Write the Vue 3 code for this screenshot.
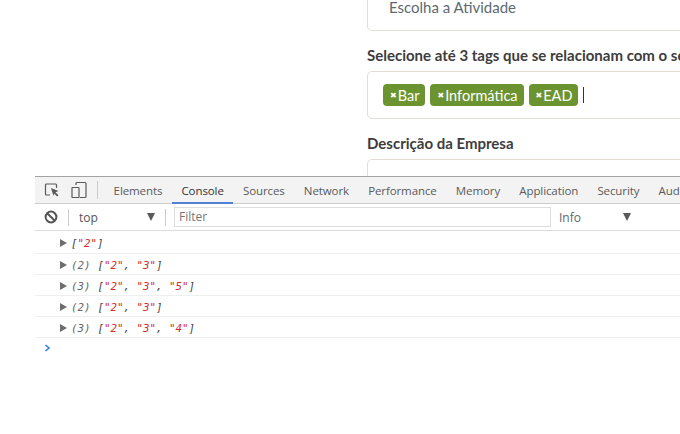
<script setup>
const tabs = ['Elements', 'Console', 'Sources', 'Network', 'Performance', 'Memory', 'Application', 'Security', 'Audits']
const logs = [
  { count: null, items: ['2'] },
  { count: 2, items: ['2', '3'] },
  { count: 3, items: ['2', '3', '5'] },
  { count: 2, items: ['2', '3'] },
  { count: 3, items: ['2', '3', '4'] },
]
const tags = ['Bar', 'Informática', 'EAD']
</script>

<template>
  <div class="screen">
    <section class="page">
      <div class="box first"><span class="placeholder">Escolha a Atividade</span></div>
      <label class="label l1">Selecione até 3 tags que se relacionam com o seu negócio</label>
      <div class="box tagbox">
        <span v-for="t in tags" :key="t" class="tag"><i class="x">✖</i>{{ t }}</span>
        <span class="caret"></span>
      </div>
      <label class="label l2">Descrição da Empresa</label>
      <div class="box last"></div>
    </section>

    <section class="devtools">
      <div class="tabbar">
        <svg class="ico inspect" width="16" height="16" viewBox="0 0 16 16">
          <path d="M6 13H2.5a1 1 0 0 1-1-1V3a1 1 0 0 1 1-1h9a1 1 0 0 1 1 1v3" fill="none" stroke="#5a5a5a" stroke-width="1.2"/>
          <path d="M7 6l7.5 3-3 1.2 3 3-1.4 1.4-3-3L9.5 14z" fill="#5a5a5a"/>
        </svg>
        <svg class="ico device" width="16" height="18" viewBox="0 0 16 18">
          <path d="M5 4V2.5a1 1 0 0 1 1-1h8a1 1 0 0 1 1 1v13a1 1 0 0 1-1 1H9" fill="none" stroke="#5a5a5a" stroke-width="1.2"/>
          <rect x="1" y="6.5" width="7" height="10" rx="0.6" fill="none" stroke="#5a5a5a" stroke-width="1.2"/>
        </svg>
        <span class="vsep"></span>
        <span v-for="t in tabs" :key="t" class="tab" :class="{ active: t === 'Console' }">{{ t }}</span>
      </div>
      <div class="filterbar">
        <svg class="ban" width="14" height="14" viewBox="0 0 14 14">
          <circle cx="7" cy="7" r="5.4" fill="none" stroke="#555" stroke-width="2"/>
          <path d="M3.2 3.2l7.6 7.6" stroke="#555" stroke-width="2"/>
        </svg>
        <span class="vsep short"></span>
        <span class="context">top</span>
        <span class="tri"></span>
        <span class="vsep short after-tri"></span>
        <div class="filter">Filter</div>
        <span class="level">Info</span>
        <span class="tri"></span>
      </div>
      <div class="log">
        <div v-for="(l, i) in logs" :key="i" class="row">
          <span class="arrow"></span>
          <span v-if="l.count" class="count">({{ l.count }})</span>
          <span class="arr">[<template v-for="(v, j) in l.items" :key="j"><span class="str">"{{ v }}"</span><template v-if="j < l.items.length - 1">, </template></template>]</span>
        </div>
        <div class="prompt">
          <svg width="7" height="8" viewBox="0 0 7 8"><path d="M1.5 1l3.5 3-3.5 3" fill="none" stroke="#367cf1" stroke-width="1.6"/></svg>
        </div>
      </div>
    </section>
  </div>
</template>

<style>
html, body { margin: 0; background: #fff; }
</style>

<style scoped>
.screen {
  width: 680px;
  height: 434px;
  overflow: hidden;
  background: #fff;
  display: flex;
  flex-direction: column;
}
.page {
  height: 176px;
  flex: none;
  overflow: hidden;
  padding-left: 367px;
  box-sizing: border-box;
  font-family: Lato, "Open Sans", sans-serif;
  color: #3f3f3f;
}
.box {
  width: 400px;
  box-sizing: border-box;
  border: 1px solid #e3dcd0;
  border-radius: 5px;
  background: #fff;
}
.first {
  height: 31px;
  border-top: 0;
  border-radius: 0 0 5px 5px;
  padding: 0 0 0 21px;
}
.placeholder {
  display: block;
  font-size: 15px;
  line-height: 15px;
  color: #5d6a70;
}
.label {
  display: block;
  font-size: 15px;
  font-weight: 700;
  line-height: 18px;
  white-space: nowrap;
  color: #3d3d3d;
}
.l1 { margin-top: 15px; }
.l2 { margin-top: 15px; }
.tagbox {
  margin-top: 7px;
  height: 48px;
  display: flex;
  align-items: center;
  gap: 5px;
  padding: 0 0 0 15px;
}
.tag {
  display: inline-flex;
  align-items: center;
  height: 22px;
  padding: 0 6px 0 7px;
  background: #6b9431;
  border-radius: 4px;
  color: #fff;
  font-size: 14.5px;
}
.x {
  font-style: normal;
  font-size: 8px;
  margin-right: 1px;
  font-family: "DejaVu Sans", sans-serif;
}
.caret {
  width: 1px;
  height: 16px;
  background: #333;
}
.last {
  margin-top: 7px;
  height: 40px;
}
.devtools {
  margin-left: 35px;
  flex: 1;
  font-family: "Open Sans", sans-serif;
  color: #5a5a5a;
  font-size: 11.5px;
  background: #fff;
  overflow: hidden;
}
.tabbar {
  height: 28px;
  box-sizing: border-box;
  border-top: 1px solid #a3a3a3;
  border-bottom: 1px solid #cdcdcd;
  background: #f3f3f3;
  display: flex;
  align-items: center;
  white-space: nowrap;
}
.ico { flex: none; }
.inspect { margin-left: 9px; }
.device { margin-left: 11px; }
.vsep {
  flex: none;
  width: 1px;
  height: 18px;
  background: #ccc;
  margin: 0 6px 0 10px;
}
.tab {
  flex: none;
  padding: 0 9.6px;
  height: 27px;
  line-height: 27px;
  box-sizing: border-box;
  letter-spacing: -0.1px;
}
.tab.active {
  color: #333;
  border-bottom: 2px solid #4f82d6;
}
.filterbar {
  height: 27px;
  box-sizing: border-box;
  border-bottom: 1px solid #ddd;
  display: flex;
  align-items: center;
  background: #fff;
  font-size: 12px;
}
.ban { margin-left: 9px; flex: none; }
.short { height: 17px; margin: 0 10px; }
.after-tri { margin-right: 8px; }
.context { width: 68px; color: #555; }
.tri {
  flex: none;
  width: 0;
  height: 0;
  border-left: 4.5px solid transparent;
  border-right: 4.5px solid transparent;
  border-top: 8px solid #5a5a5a;
}
.filter {
  width: 377px;
  height: 20px;
  box-sizing: border-box;
  border: 1px solid #ddd;
  line-height: 18px;
  padding-left: 4px;
  color: #757575;
  flex: none;
}
.level { margin-left: 8px; width: 64px; color: #666; }
.log {
  font-family: "DejaVu Sans Mono", monospace;
  font-size: 10.8px;
  font-style: italic;
  color: #444;
}
.row {
  height: 21px;
  box-sizing: border-box;
  border-bottom: 1px solid #efefef;
  padding-left: 25px;
  display: flex;
  align-items: center;
  white-space: pre;
  padding-top: 2px;
}
.row:first-child { height: 23px; }
.arrow {
  flex: none;
  width: 0;
  height: 0;
  border-top: 4px solid transparent;
  border-bottom: 4px solid transparent;
  border-left: 7px solid #6e6e6e;
  margin-right: 4px;
}
.count { color: #666; margin-right: 7px; }
.str { color: #d22c2c; }
.prompt {
  height: 20px;
  padding-left: 9px;
  display: flex;
  align-items: center;
}
</style>
